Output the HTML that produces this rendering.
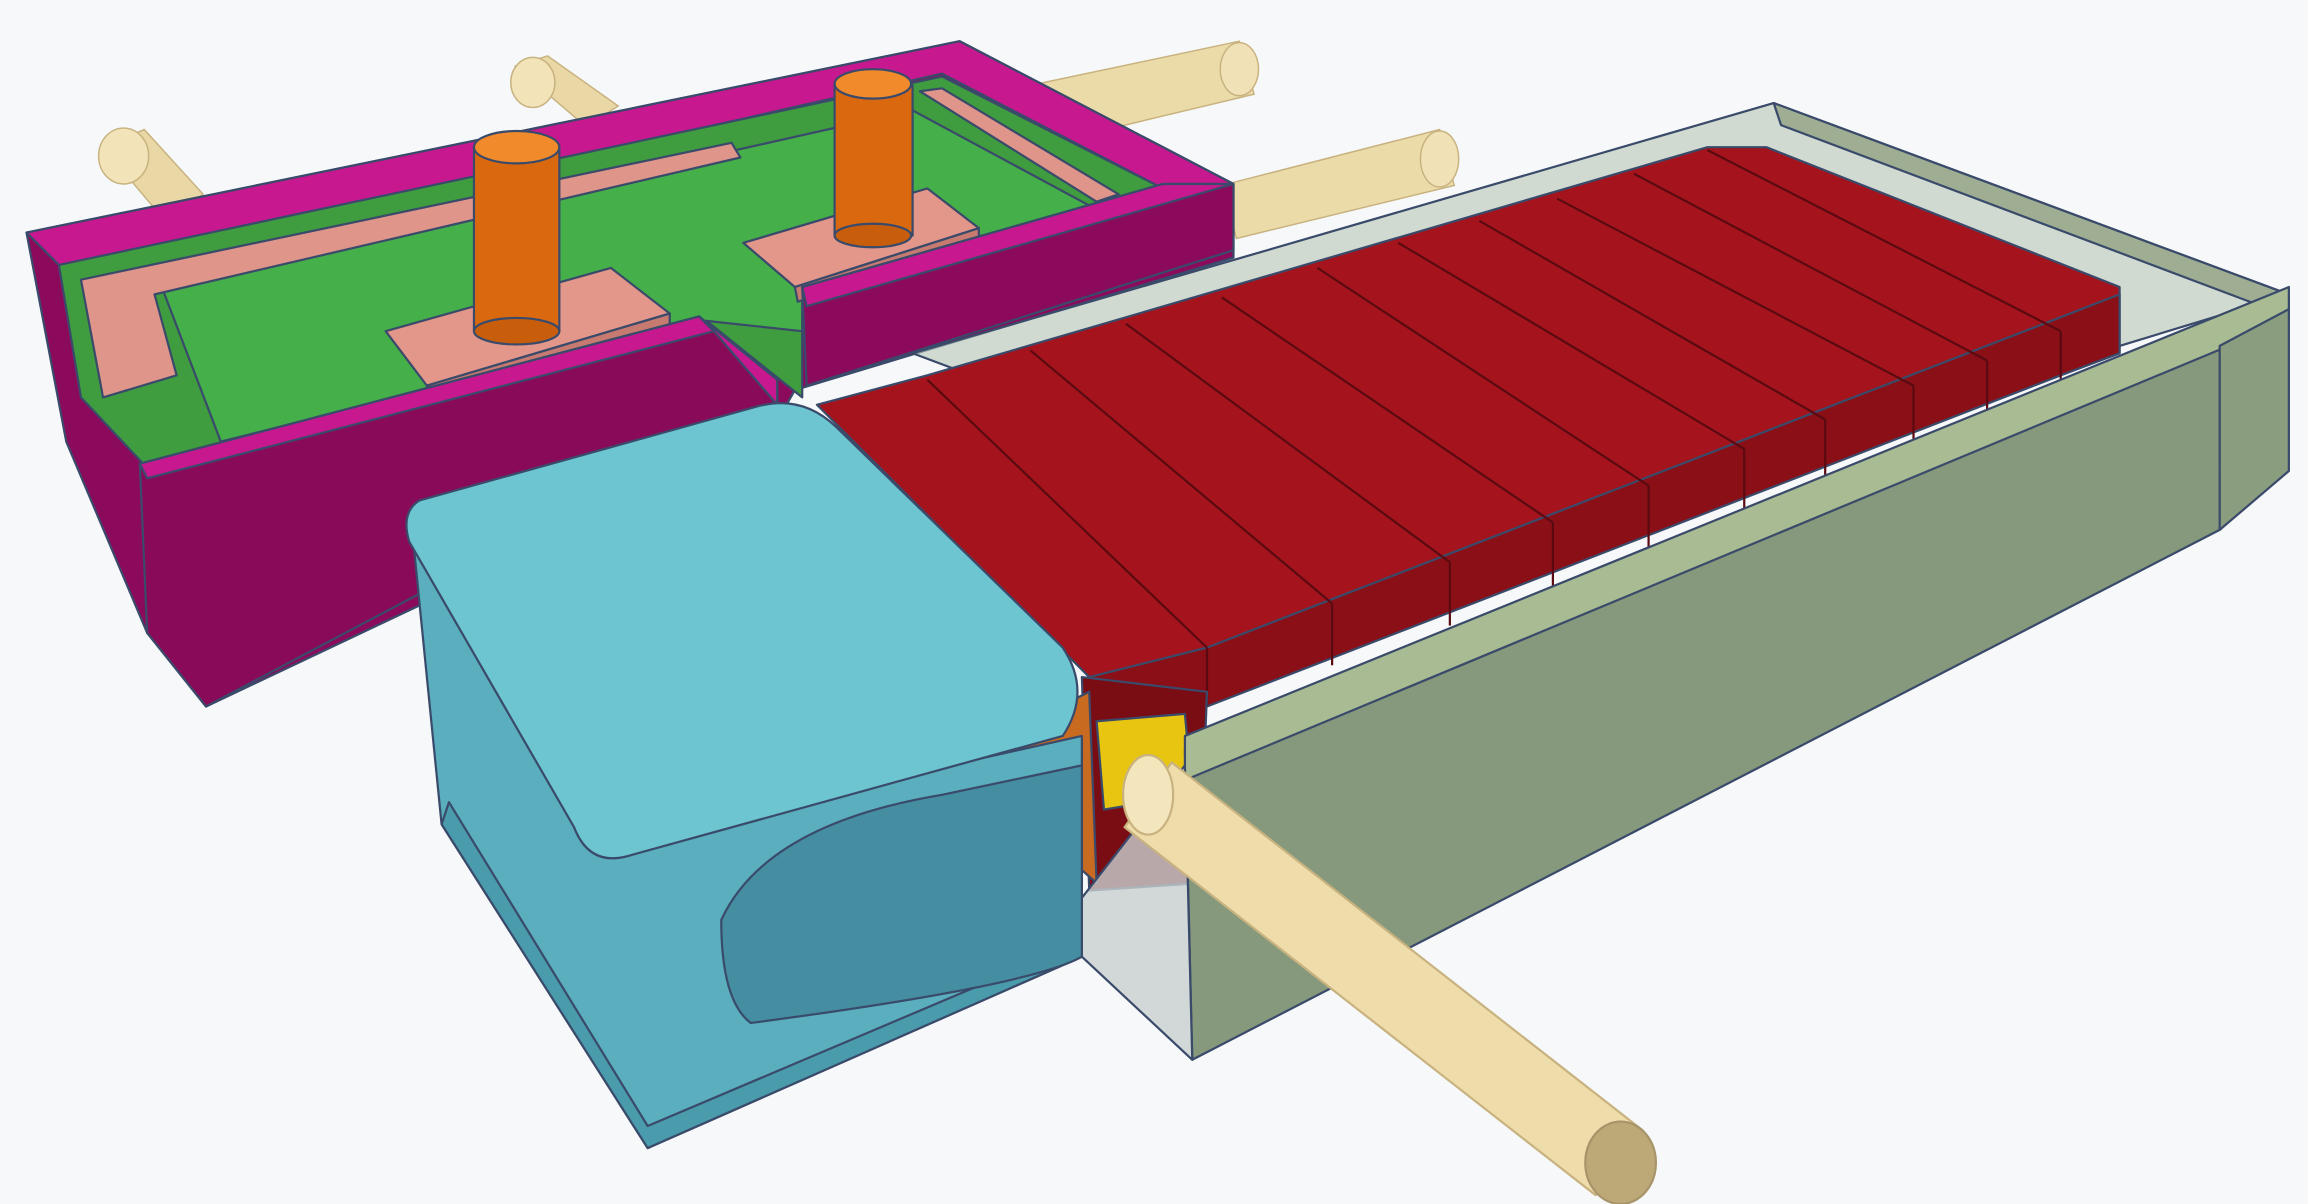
<!DOCTYPE html>
<html><head><meta charset="utf-8"><style>
html,body{margin:0;padding:0;background:#f7f8f9;overflow:hidden}
svg{display:block}
</style></head><body>
<svg width="2308" height="1204" viewBox="0 0 1568 818" preserveAspectRatio="none" xmlns="http://www.w3.org/2000/svg">
<rect width="1568" height="818" fill="#f7f8f9"/>
<g stroke="#c8b27f" stroke-width="1">
<polygon points="70,100 98,88 138,132 112,150" fill="#e9d8a6"/>
<ellipse cx="84" cy="106" rx="17" ry="19" fill="#f2e4b8"/>
<polygon points="350,45 372,38 420,72 398,86" fill="#e9d8a6"/>
<ellipse cx="362" cy="56" rx="15" ry="17" fill="#f2e4b8"/>
<polygon points="700,58 842,28 852,64 710,98" fill="#eadba9"/>
<ellipse cx="842" cy="47" rx="13" ry="18" fill="#f0e2b6"/>
<polygon points="830,126 978,88 988,126 840,162" fill="#eadba9"/>
<ellipse cx="978" cy="108" rx="13" ry="19" fill="#f0e2b6"/>
</g>
<g stroke="#3a4a6a" stroke-width="1.5" stroke-linejoin="round">
<polygon points="18,158 652,28 838,125 838,175 540,265 520,300 140,480 100,430 45,300" fill="#8c0a5c"/>
<polygon points="18,158 652,28 838,125 790,128 640,50 45,185" fill="#c8188f"/>
<polygon points="40,180 640,52 790,128 545,195 545,270 480,218 100,318 55,270" fill="#3f9c3f"/>
<polygon points="108,190 620,75 750,145 545,195 545,225 480,218 150,300" fill="#45b04a"/>
<polygon points="55,190 497,97 503,107 105,200 120,255 70,270" fill="#e0958a"/>
<polygon points="625,62 640,60 760,132 745,137" fill="#e0958a"/>
<polygon points="262,225 415,182 455,213 290,262" fill="#e3968a"/>
<polygon points="290,262 455,213 455,225 292,275" fill="#c77a70"/>
<polygon points="505,165 630,128 665,155 540,195" fill="#e3968a"/>
<polygon points="540,195 665,155 665,165 542,205" fill="#c77a70"/>
<rect x="322" y="100" width="58" height="125" fill="#d9680f"/>
<ellipse cx="351" cy="225" rx="29" ry="9" fill="#c85e0c"/>
<ellipse cx="351" cy="100" rx="29" ry="11" fill="#f08a2a"/>
<rect x="567" y="58" width="53" height="102" fill="#d9680f"/>
<ellipse cx="593" cy="160" rx="26" ry="8" fill="#c85e0c"/>
<ellipse cx="593" cy="57" rx="26" ry="10" fill="#f08a2a"/>
<polygon points="95,315 475,215 528,258 528,275 140,480 100,430" fill="#8a0a5a"/>
<polygon points="95,315 475,215 485,225 100,325" fill="#c8188f"/>
<polygon points="475,215 528,258 528,275 485,225" fill="#c8188f"/>
<polygon points="545,195 790,125 838,125 838,170 548,262" fill="#8c0a5c"/>
<polygon points="545,195 790,125 838,125 548,208" fill="#c8188f"/>
<polygon points="620,240 1205,70 1555,200 1440,235 820,470 700,270" fill="#b8c6b4" fill-opacity="0.6"/>
<polygon points="1205,70 1555,200 1555,215 1210,85" fill="#9fae93"/>
<polygon points="555,275 630,255 1160,100 1200,100 1440,195 1440,240 820,470 740,460" fill="#a5141c"/>
<polygon points="740,460 820,440 1440,200 1440,240 1400,255 820,480 805,500 740,500" fill="#8a0f16"/>
<g stroke="#5a0a10" stroke-width="1.5" fill="none">
<path d="M630,258 L820,440"/><path d="M700,238 L905,410"/><path d="M765,220 L985,382"/>
<path d="M830,202 L1055,355"/><path d="M895,182 L1120,330"/><path d="M950,165 L1185,305"/>
<path d="M1005,150 L1240,285"/><path d="M1058,135 L1300,262"/><path d="M1110,118 L1350,245"/>
<path d="M1160,102 L1400,225"/>
<path d="M820,440 L820,480"/><path d="M905,410 L905,452"/><path d="M985,382 L985,425"/>
<path d="M1055,355 L1055,398"/><path d="M1120,330 L1120,372"/><path d="M1185,305 L1185,348"/>
<path d="M1240,285 L1240,325"/><path d="M1300,262 L1300,302"/><path d="M1350,245 L1350,282"/><path d="M1400,225 L1400,262"/>
</g>
<polygon points="735,460 820,470 815,600 740,605" fill="#7a0c14"/>
<polygon points="745,490 805,485 810,540 750,550" fill="#e8c510"/>
<polygon points="680,500 740,470 745,600 700,560" fill="#c86a20"/>
<polygon points="805,510 1555,200 1508,360 810,720" fill="#86997c"/>
<polygon points="805,500 1555,195 1555,218 805,530" fill="#a9bb93"/>
<polygon points="1508,235 1555,210 1555,320 1508,360" fill="#8a9d7e"/>
<polygon points="735,610 805,520 810,720 735,650" fill="#c8cfcf" fill-opacity="0.8"/>
<polygon points="796,518 1116,768 1084,812 764,562" fill="#eedcab" stroke="#c8b27f"/>
<ellipse cx="780" cy="540" rx="17" ry="27" fill="#f3e6bc" stroke="#c8b27f"/>
<ellipse cx="1101" cy="790" rx="24" ry="28" fill="#bda877" stroke="#a8946a"/>
<polygon points="280,360 420,570 735,500 735,650 440,780 300,560" fill="#5aaebd"/>
<path d="M300,560 L440,780 L735,650 L735,640 L440,765 L305,545Z" fill="#4a9bac"/>
<path d="M490,625 Q520,560 640,540 L735,520 L735,650 Q700,670 510,695 Q490,680 490,625Z" fill="#458ea2"/>
<path d="M285,340 L515,276 Q545,268 568,290 L722,440 Q742,470 722,500 L425,582 Q400,588 390,562 L278,368 Q272,348 285,340Z" fill="#6cc5d1"/>
</g>
</svg>
</body></html>
